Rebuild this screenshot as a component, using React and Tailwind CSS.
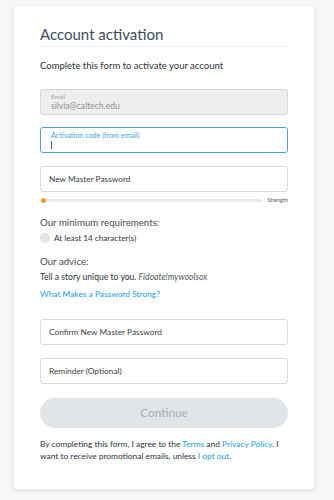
import React from 'react';

const font = { fontFamily: 'Lato, "Open Sans", sans-serif' };

const Field = ({ label }) => (
  <div className="h-[26px] rounded-[3px] border border-[#d9dadb] bg-white px-[8px] flex items-center">
    <span className="text-[8.3px] text-[#3b3f45]">{label}</span>
  </div>
);

export default function App() {
  return (
    <div className="min-h-[500px] bg-[#f6f7f9] pt-[5px] px-[13px] pb-[8px]" style={font}>
      <div className="w-[302px] bg-white rounded-[4px] border border-[#ebedf0] shadow-[0_1px_3px_rgba(0,0,0,0.12)] px-[26px] pt-[18px] pb-[27px]">
        <h1 className="text-[15px] leading-[20px] text-[#3d4a5e] pb-[2px] border-b border-[#eef0f2]">
          Account activation
        </h1>
        <p className="mt-[13px] text-[9.5px] leading-[12px] text-[#2f3338]">
          Complete this form to activate your account
        </p>

        <div className="mt-[17px] h-[26px] rounded-[3px] border border-[#d3d5d7] bg-[#eeeeee] px-[10px] flex flex-col justify-center">
          <span className="text-[6px] leading-[8px] text-[#9a9da1]">Email</span>
          <span className="text-[8.6px] leading-[10px] text-[#8d9094]">silvia@caltech.edu</span>
        </div>

        <div className="mt-[12px] h-[26px] rounded-[3px] border border-[#4a9fe0] bg-white px-[10px] flex flex-col justify-center">
          <span className="text-[7.2px] leading-[9px] text-[#4a9fe0]">Activation code (from email)</span>
          <span className="mt-[1px] w-px h-[8px] bg-[#55595e]"></span>
        </div>

        <div className="mt-[13px]">
          <Field label="New Master Password" />
        </div>

        <div className="mt-[4px] h-[8px] flex items-center gap-[5px]">
          <div className="relative flex-1 h-[3px] rounded-full bg-[#ebebeb]">
            <span className="absolute left-[1px] top-[-1px] w-[5px] h-[5px] rounded-full bg-[#f39a2b]"></span>
          </div>
          <span className="text-[5.5px] text-[#55595e]">Strength</span>
        </div>

        <p className="mt-[12px] text-[9.7px] leading-[12px] text-[#474d55]">Our minimum requirements:</p>
        <div className="mt-[4px] h-[12px] flex items-center gap-[4px]">
          <span className="w-[10px] h-[10px] rounded-full bg-[#e3e3e3]"></span>
          <span className="text-[8.2px] leading-[12px] text-[#2f3338]">At least 14 character(s)</span>
        </div>

        <p className="mt-[11px] text-[9.7px] leading-[12px] text-[#474d55]">Our advice:</p>
        <p className="mt-[4px] text-[8.6px] leading-[12px] text-[#2f3338]">
          Tell a story unique to you. <i className="text-[#55595e]">Fidoate!mywoolsox</i>
        </p>
        <p className="mt-[5px] text-[8.4px] leading-[12px] text-[#1aa0e0]">What Makes a Password Strong?</p>

        <div className="mt-[19px]">
          <Field label="Confirm New Master Password" />
        </div>
        <div className="mt-[13px]">
          <Field label="Reminder (Optional)" />
        </div>

        <button className="mt-[14px] w-full h-[30px] rounded-full bg-[#e1e5e7] text-[11.8px] text-[#a8adb1]">
          Continue
        </button>

        <p className="mt-[11px] text-[8.4px] leading-[11.5px] text-[#2f3338]">
          By completing this form, I agree to the <span className="text-[#1aa0e0]">Terms</span> and{' '}
          <span className="text-[#1aa0e0]">Privacy Policy</span>. I want to receive promotional emails, unless{' '}
          <span className="text-[#1aa0e0]">I opt out</span>.
        </p>
      </div>
    </div>
  );
}
